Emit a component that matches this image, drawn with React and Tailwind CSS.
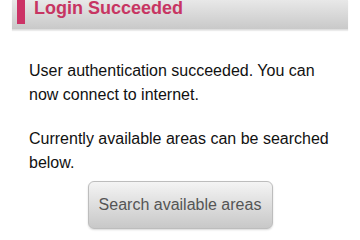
import React from 'react';

function App() {
    return (
        <div className="w-[360px] h-[240px] overflow-hidden bg-white" style={{ fontFamily: '"Liberation Sans", Arial, sans-serif' }}>
            <div className="mx-[12px] h-[30px] bg-gradient-to-b from-[#e8e8e8] to-[#c9c9c9] border-b border-[#dedede] shadow-[0_1px_1px_rgba(0,0,0,0.08)] flex">
                <div className="ml-[5px] w-[8px] h-[24px] bg-[#cc3366]"></div>
                <h1 className="ml-[9px] -mt-[1px] text-[18px] leading-[18px] font-bold text-[#c73562]">Login Succeeded</h1>
            </div>
            <div className="px-[29px] text-[16px] leading-[24px] text-[#111]">
                <p className="mt-[29px]">User authentication succeeded. You can now connect to internet.</p>
                <p className="mt-[20px]">Currently available areas can be searched below.</p>
            </div>
            <div className="flex justify-center mt-[6px]">
                <button className="w-[185px] h-[48px] rounded-[6px] border border-[#bdbdbd] bg-gradient-to-b from-[#f4f4f4] to-[#c8c8c8] text-[16px] text-[#555] shadow-[0_1px_2px_rgba(0,0,0,0.15)]">
                    Search available areas
                </button>
            </div>
        </div>
    );
}

export default App;
